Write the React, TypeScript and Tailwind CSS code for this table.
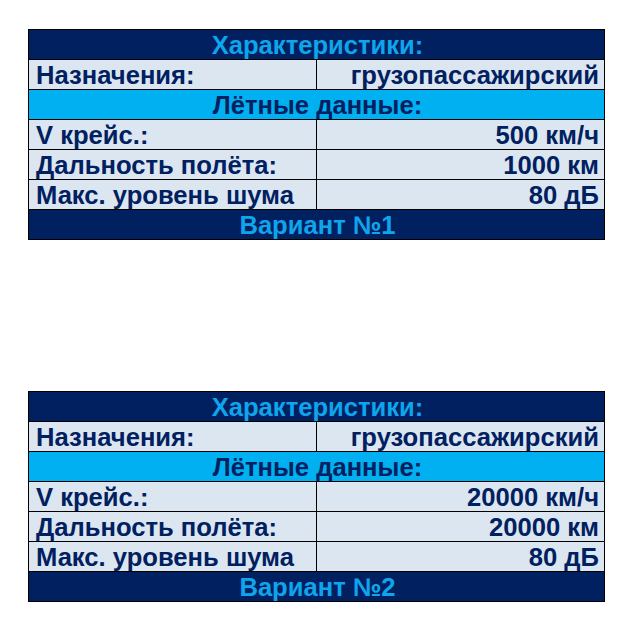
const specs = [
  {
    variant: "Вариант №1",
    purpose: "грузопассажирский",
    speed: "500 км/ч",
    range: "1000 км",
    noise: "80 дБ",
  },
  {
    variant: "Вариант №2",
    purpose: "грузопассажирский",
    speed: "20000 км/ч",
    range: "20000 км",
    noise: "80 дБ",
  },
];

type Spec = (typeof specs)[number];

function SpecTable({ spec }: { spec: Spec }) {
  const cell = "h-[30px] border border-black pl-[7px] pr-[5px] pb-0 pt-0 align-bottom leading-none";
  const rows = [
    ["V крейс.:", spec.speed],
    ["Дальность полёта:", spec.range],
    ["Макс. уровень шума", spec.noise],
  ];

  return (
    <table className="w-[577px] table-fixed border-collapse text-[25.6px] font-bold text-[#002060]">
      <tbody>
        <tr className="bg-[#002060] text-[#0ea5ec]">
          <td colSpan={2} className={`${cell} text-center`}>
            Характеристики:
          </td>
        </tr>
        <tr className="bg-[#dce6f1]">
          <td className={cell}>Назначения:</td>
          <td className={`${cell} text-right`}>{spec.purpose}</td>
        </tr>
        <tr className="bg-[#00b0f0]">
          <td colSpan={2} className={`${cell} text-center`}>
            Лётные данные:
          </td>
        </tr>
        {rows.map(([label, value]) => (
          <tr key={label} className="bg-[#dce6f1]">
            <td className={cell}>{label}</td>
            <td className={`${cell} text-right`}>{value}</td>
          </tr>
        ))}
        <tr className="bg-[#002060] text-[#0ea5ec]">
          <td colSpan={2} className={`${cell} text-center`}>
            {spec.variant}
          </td>
        </tr>
      </tbody>
    </table>
  );
}

export default function App() {
  return (
    <div
      className="flex min-h-[634px] flex-col gap-[151px] bg-white pl-[28px] pt-[29px]"
      style={{ fontFamily: '"Liberation Sans", Arial, sans-serif' }}
    >
      {specs.map((spec) => (
        <SpecTable key={spec.variant} spec={spec} />
      ))}
    </div>
  );
}
